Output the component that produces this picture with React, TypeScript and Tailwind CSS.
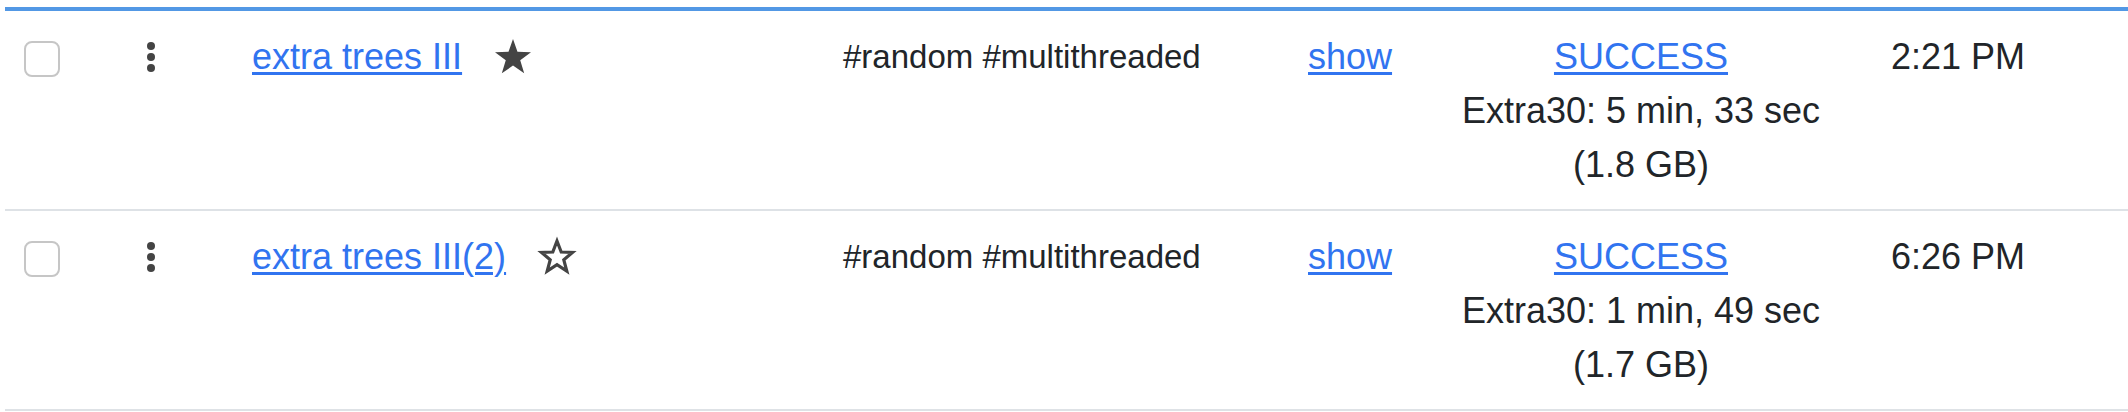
const rows = [
    { name: "extra trees III", starred: true, duration: "Extra30: 5 min, 33 sec", size: "(1.8 GB)", time: "2:21 PM" },
    { name: "extra trees III(2)", starred: false, duration: "Extra30: 1 min, 49 sec", size: "(1.7 GB)", time: "6:26 PM" },
];

const linkClass = "text-[#3174f0] underline decoration-[3px] underline-offset-[3px]";

const Star = ({ filled }: { filled: boolean }) =>
    filled ? (
        <svg width="36" height="36" viewBox="0 0 36 36" className="mt-[8px] ml-[33px] shrink-0">
            <polygon
                points="18,1 22.47,13.85 36.07,14.13 25.23,22.35 29.17,35.37 18,27.6 6.83,35.37 10.77,22.35 -0.07,14.13 13.53,13.85"
                fill="#444444"
            />
        </svg>
    ) : (
        <svg width="36" height="36" viewBox="0 0 36 36" className="mt-[8px] ml-[33px] shrink-0 overflow-visible">
            <polygon
                points="18,3 22.2,14 33.5,14.4 24.8,21.8 27.8,33 18,26.6 8.2,33 11.2,21.8 2.5,14.4 13.8,14"
                fill="none"
                stroke="#444444"
                strokeWidth="3.2"
                strokeLinejoin="miter"
            />
        </svg>
    );

const Kebab = () => (
    <svg width="8" height="30" viewBox="0 0 8 30" className="mt-[12px]">
        <circle cx="4" cy="4" r="4" fill="#444444" />
        <circle cx="4" cy="15" r="4" fill="#444444" />
        <circle cx="4" cy="26" r="4" fill="#444444" />
    </svg>
);

const App = () => {
    return (
        <div className="bg-white w-[2128px] h-[412px] overflow-hidden font-['Liberation_Sans',Arial,sans-serif] text-[36px] leading-[54px] text-[#212529]">
            <div className="ml-[5px] mt-[7px] border-t-4 border-[#5298e5]">
                {rows.map((r) => (
                    <div key={r.name} className="flex border-b-2 border-[#dee2e6] pt-[19px] pb-[17px]">
                        <div className="w-[100px] shrink-0 pl-[19px]">
                            <div className="mt-[11px] size-[36px] rounded-[8px] border-2 border-[#c6c6c6] bg-white" />
                        </div>
                        <div className="w-[125px] shrink-0 pl-[42px]">
                            <Kebab />
                        </div>
                        <div className="w-[595px] shrink-0 pl-[22px] flex items-start">
                            <a href="#" className={linkClass}>
                                {r.name}
                            </a>
                            <Star filled={r.starred} />
                        </div>
                        <div className="w-[465px] shrink-0 pl-[18px] text-[33px]">
                            #random #multithreaded
                        </div>
                        <div className="w-[150px] shrink-0 pl-[18px]">
                            <a href="#" className={linkClass}>
                                show
                            </a>
                        </div>
                        <div className="w-[402px] shrink-0 flex flex-col items-center text-center">
                            <a href="#" className={linkClass}>
                                SUCCESS
                            </a>
                            <span>{r.duration}</span>
                            <span>{r.size}</span>
                        </div>
                        <div className="flex-1 pl-[49px]">{r.time}</div>
                    </div>
                ))}
            </div>
        </div>
    );
};

export default App;
